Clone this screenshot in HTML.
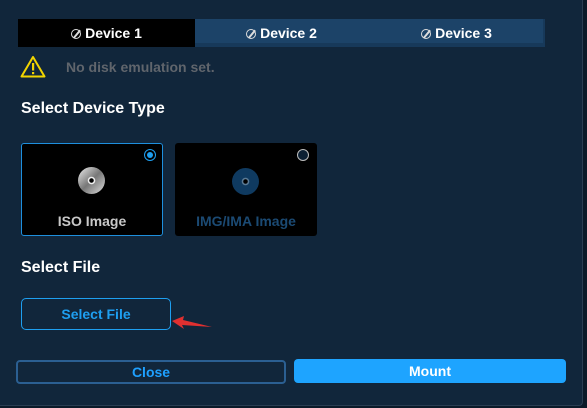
<!DOCTYPE html>
<html><head><style>
body{margin:0;width:587px;height:408px;background:#0b1a29;font-family:"Liberation Sans",sans-serif;font-weight:bold;position:relative;overflow:hidden}
.p{position:absolute;left:0;top:0;width:582px;height:405px;background:#11263b;border-right:1px solid #2a3d52;border-bottom:1px solid #2a3d52;border-radius:0 0 4px 0}
.a{position:absolute}
.tab{position:absolute;top:19px;height:28px;line-height:28px;text-align:center;color:#fff;font-size:14px}
.ic{display:inline-block;width:8px;height:8px;border:1.6px solid #ddd;border-radius:50%;position:relative;vertical-align:-1px;margin-right:4px}
.ic:after{content:"";position:absolute;left:3.5px;top:-1px;width:1.6px;height:10px;background:#ddd;transform:rotate(40deg)}
.card{position:absolute;top:143px;width:140px;height:91px;background:#000;border-radius:3px}
</style></head><body>
<div class="p"></div>
<div class="tab" style="left:18px;width:177px;background:#000"><span class="ic"></span>Device 1</div>
<div class="tab" style="left:195px;width:173px;background:#1c4368;box-shadow:inset 0 -4px #17395a"><span class="ic"></span>Device 2</div>
<div class="tab" style="left:368px;width:177px;background:#1c4368;box-shadow:inset 0 -4px #17395a,inset -2px 0 #17395a"><span class="ic"></span>Device 3</div>
<svg class="a" style="left:20px;top:55px" width="26" height="23" viewBox="0 0 26 23"><path d="M13 2 L24.5 21.5 H1.5 Z" fill="none" stroke="#f2d500" stroke-width="2" stroke-linejoin="round"/><rect x="12" y="8" width="2.2" height="7.5" fill="#f2d500"/><rect x="12" y="17" width="2.2" height="2.2" fill="#f2d500"/></svg>
<div class="a" style="left:66px;top:59px;font-size:14px;color:#60656c">No disk emulation set.</div>
<div class="a" style="left:21px;top:100px;font-size:16px;color:#fff">Select Device Type</div>
<div class="card" style="left:21px;border:1px solid #1e8fdd"></div>
<div class="a" style="left:144px;top:149px;width:10px;height:10px;border:1.3px solid #1e9ff0;border-radius:50%"><div style="margin:2px;width:6px;height:6px;border-radius:50%;background:#1e9ff0"></div></div>
<div class="a" style="left:78px;top:167px;width:27px;height:27px;border-radius:50%;background:radial-gradient(circle,#000 0 2px,#eee 2.5px 3.5px,transparent 4px),linear-gradient(135deg,#eee,#777 50%,#ddd)"></div>
<div class="a" style="left:22px;top:213px;width:140px;text-align:center;color:#c8c8c8;font-size:14px">ISO Image</div>
<div class="card" style="left:175px;width:142px;height:93px"></div>
<div class="a" style="left:297px;top:149px;width:10px;height:10px;border:1.3px solid #bbb;border-radius:50%;background:#0d2033"></div>
<div class="a" style="left:232px;top:168px;width:27px;height:27px;border-radius:50%;background:radial-gradient(circle,#000 0 2px,#5a7a95 2.5px 3.5px,#0f3a60 4px)"></div>
<div class="a" style="left:175px;top:213px;width:142px;text-align:center;color:#1b4a73;font-size:14px">IMG/IMA Image</div>
<div class="a" style="left:21px;top:259px;font-size:16px;color:#fff">Select File</div>
<div class="a" style="left:21px;top:298px;width:148px;height:30px;border:1px solid #1e9ff0;border-radius:5px;line-height:30px;text-align:center;color:#1e9ff0;font-size:14px">Select File</div>
<svg class="a" style="left:170px;top:315px" width="45" height="20"><path d="M2 6 L14 1 L13 5 L42 12 L12 10 L14 14 Z" fill="#e03030"/></svg>
<div class="a" style="left:16px;top:360px;width:266px;height:20px;border:2px solid #2b5f92;border-radius:4px;line-height:21px;text-align:center;color:#1ea0ff;font-size:14px">Close</div>
<div class="a" style="left:294px;top:359px;width:272px;height:24px;background:#1ea4ff;border-radius:4px;line-height:24px;text-align:center;color:#fff;font-size:14px">Mount</div>
</body></html>
